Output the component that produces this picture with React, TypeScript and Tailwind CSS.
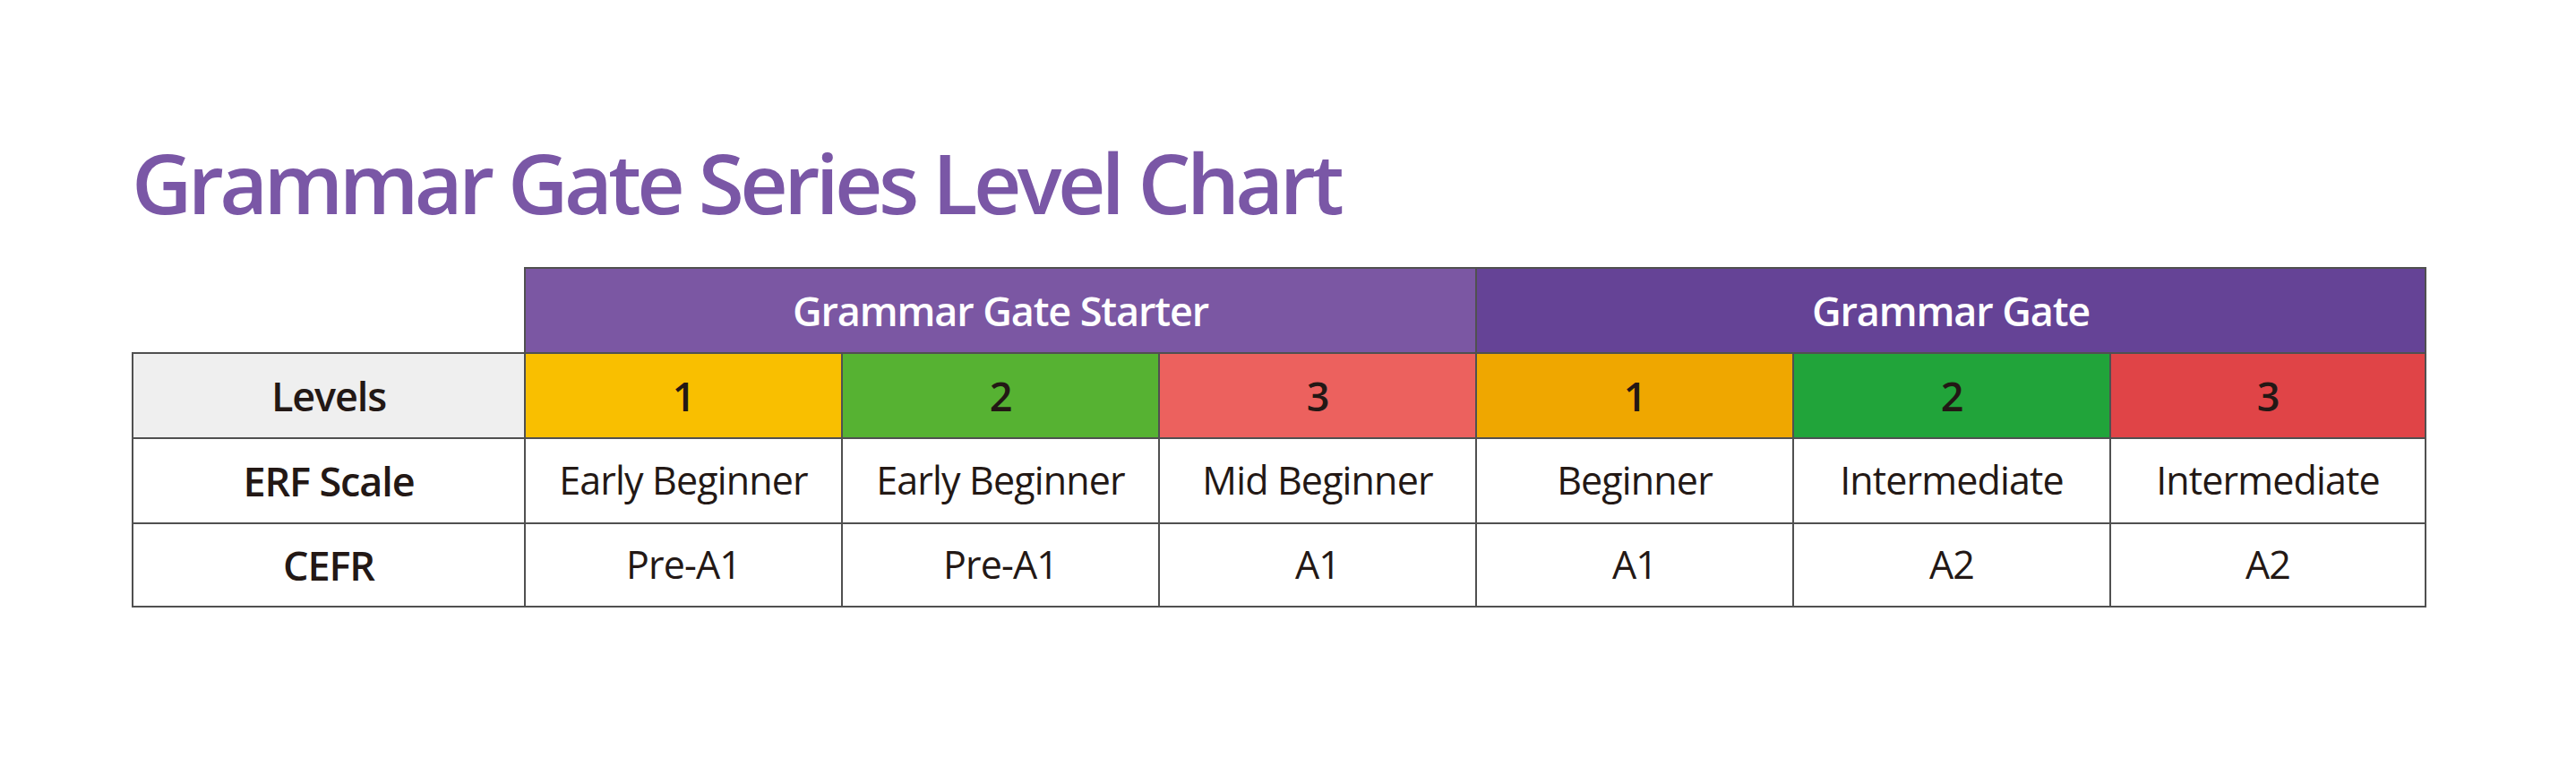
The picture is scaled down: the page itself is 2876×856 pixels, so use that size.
const FONT = { fontFamily: '"Open Sans", "Noto Sans", sans-serif' };

type Level = { label: string; bg: string; erf: string; cefr: string };

const LEVELS: Level[] = [
  { label: '1', bg: 'bg-[#f9bf00]', erf: 'Early Beginner', cefr: 'Pre-A1' },
  { label: '2', bg: 'bg-[#56b232]', erf: 'Early Beginner', cefr: 'Pre-A1' },
  { label: '3', bg: 'bg-[#ec615e]', erf: 'Mid Beginner', cefr: 'A1' },
  { label: '1', bg: 'bg-[#efa700]', erf: 'Beginner', cefr: 'A1' },
  { label: '2', bg: 'bg-[#21a43a]', erf: 'Intermediate', cefr: 'A2' },
  { label: '3', bg: 'bg-[#e04447]', erf: 'Intermediate', cefr: 'A2' },
];

const cell = 'flex items-center justify-center border-l-2 border-t-2 border-[#505050]';
const bold = 'text-[45px] font-semibold tracking-[-0.025em]';

const App: React.FC = () => (
  <div className="min-h-screen w-full bg-white text-[#231815]" style={FONT}>
    <div className="flex flex-col pl-[147px] pt-[157px]">
      <h1 className="text-[93px] font-semibold leading-none tracking-[-0.05em] text-[#7a57a6]">
        Grammar Gate Series Level Chart
      </h1>

      <div className="mt-[47px] grid w-max grid-cols-[438px_repeat(6,354px)] grid-rows-[repeat(4,95px)] pt-px text-[43px] tracking-[-0.02em]">
        <div />
        <div className={`${cell} ${bold} col-span-3 bg-[#7b57a3] text-white`}>Grammar Gate Starter</div>
        <div className={`${cell} ${bold} col-span-3 border-r-2 bg-[#654396] text-white`}>Grammar Gate</div>

        <div className={`${cell} ${bold} bg-[#efefef]`}>Levels</div>
        {LEVELS.map((l, i) => (
          <div key={`lv${i}`} className={`${cell} ${bold} ${l.bg} ${i === 5 ? 'border-r-2' : ''}`}>
            {l.label}
          </div>
        ))}

        <div className={`${cell} ${bold}`}>ERF Scale</div>
        {LEVELS.map((l, i) => (
          <div key={`erf${i}`} className={`${cell} ${i === 5 ? 'border-r-2' : ''}`}>
            {l.erf}
          </div>
        ))}

        <div className={`${cell} ${bold} border-b-2`}>CEFR</div>
        {LEVELS.map((l, i) => (
          <div key={`cefr${i}`} className={`${cell} border-b-2 ${i === 5 ? 'border-r-2' : ''}`}>
            {l.cefr}
          </div>
        ))}
      </div>
    </div>
  </div>
);

export default App;
